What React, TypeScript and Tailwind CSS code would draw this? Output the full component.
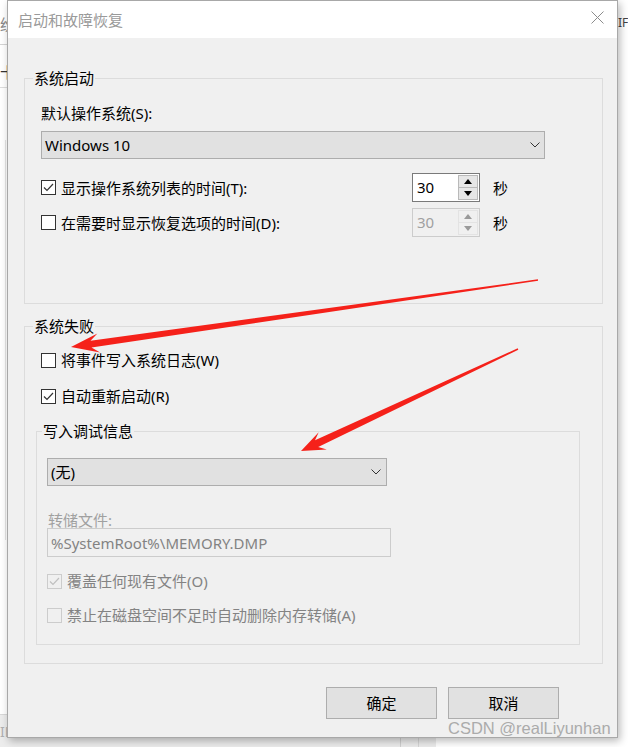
import React from "react";

function arrowPoints(
  tx: number, ty: number, hx: number, hy: number,
  tailW: number, neckW: number, headLen: number, headHalf: number
) {
  const dx = hx - tx, dy = hy - ty;
  const L = Math.hypot(dx, dy);
  const ux = dx / L, uy = dy / L;
  const nx = -uy, ny = ux;
  const bx = hx - ux * headLen, by = hy - uy * headLen;
  const kx = hx - ux * headLen * 0.72, ky = hy - uy * headLen * 0.72;
  const p = [
    [tx + (nx * tailW) / 2, ty + (ny * tailW) / 2],
    [kx + (nx * neckW) / 2, ky + (ny * neckW) / 2],
    [bx + nx * headHalf, by + ny * headHalf],
    [hx, hy],
    [bx - nx * headHalf, by - ny * headHalf],
    [kx - (nx * neckW) / 2, ky - (ny * neckW) / 2],
    [tx - (nx * tailW) / 2, ty - (ny * tailW) / 2],
  ];
  return p.map((q) => q.map((v) => v.toFixed(1)).join(",")).join(" ");
}

function Check({ checked, disabled }: { checked?: boolean; disabled?: boolean }) {
  return (
    <div
      className={`w-[15px] h-[15px] shrink-0 border ${
        disabled ? "border-[#cccccc] bg-[#f0f0f0]" : "border-[#333333] bg-white"
      }`}
    >
      {checked && (
        <svg width="13" height="13" viewBox="0 0 13 13" className="block">
          <polyline
            points="2,6.5 5,9.5 11,3"
            fill="none"
            stroke={disabled ? "#c0c0c0" : "#333333"}
            strokeWidth="1.2"
          />
        </svg>
      )}
    </div>
  );
}

function Chevron() {
  return (
    <svg width="10" height="6" viewBox="0 0 10 6" className="block">
      <polyline points="0.5,0.5 5,5 9.5,0.5" fill="none" stroke="#333333" strokeWidth="1" />
    </svg>
  );
}

function Tri({ up, color }: { up?: boolean; color: string }) {
  return (
    <svg width="8" height="5" viewBox="0 0 8 5" className="block">
      <polygon points={up ? "0,5 4,0 8,5" : "0,0 8,0 4,5"} fill={color} />
    </svg>
  );
}

function Spin({ disabled }: { disabled?: boolean }) {
  const btn = disabled
    ? "border-[#e3e3e3] bg-[#f0f0f0]"
    : "border-[#b9b9b9] bg-[#e6e6e6]";
  const tri = disabled ? "#9a9a9a" : "#000000";
  return (
    <div
      className={`flex h-[29px] w-[68px] border ${
        disabled ? "border-[#cccccc] bg-[#f0f0f0]" : "border-[#7a7a7a] bg-white"
      }`}
    >
      <div
        className={`flex-1 pl-[4px] leading-[27px] text-[15px] ${
          disabled ? "text-[#a0a0a0]" : "text-black"
        }`}
      >
        30
      </div>
      <div className="flex flex-col w-[20px] my-[1px] mr-[1px]">
        <div className={`flex-1 border flex items-center justify-center ${btn}`}>
          <Tri up color={tri} />
        </div>
        <div className={`flex-1 border border-t-0 flex items-center justify-center ${btn}`}>
          <Tri color={tri} />
        </div>
      </div>
    </div>
  );
}

function GroupLabel({ children, ml }: { children: React.ReactNode; ml: string }) {
  return (
    <div className={`-mt-[10px] ${ml} self-start px-[1px] bg-[#f0f0f0] leading-[19px] text-[15px] text-black`}>
      {children}
    </div>
  );
}

export default function App() {
  const a1 = arrowPoints(538, 280, 71, 347, 1.5, 7, 28, 9.5);
  const a2 = arrowPoints(518, 349, 301, 451, 1.5, 7.5, 24, 9.5);

  return (
    <div className="relative w-[628px] h-[747px] overflow-hidden bg-white font-['Noto_Sans','Noto_Sans_CJK_SC',sans-serif]">
      {/* window behind */}
      <div className="absolute left-0 top-[15px] text-[15px] leading-[18px] text-[#888888]">纷</div>
      <div className="absolute left-0 top-[44px] w-[8px] h-[1px] bg-[#d4d4d4]" />
      <div className="absolute left-0 top-[63px] text-[15px] leading-[18px] text-[#333333]">十</div>
      <div className="absolute left-0 top-[87px] w-[8px] h-[1px] bg-[#dddddd]" />
      <div className="absolute left-[5px] top-[140px] w-[1px] h-[400px] bg-[#e4e4e4]" />
      <div className="absolute left-0 top-[714px] w-[436px] h-[33px] bg-[#ececec] border-t border-[#d8d8d8]" />
      <div className="absolute left-0 top-[724px] text-[14px] leading-[16px] text-[#b0b0b0]">IE</div>
      <div className="absolute left-[400px] top-[714px] w-[1px] h-[33px] bg-[#d0d0d0]" />
      <div className="absolute left-[418px] top-[714px] w-[1px] h-[33px] bg-[#d6d6d6]" />
      <div className="absolute left-[618px] top-[15px] text-[12px] leading-[16px] text-[#444444]">IF</div>

      {/* dialog */}
      <div className="absolute left-[7px] top-0 w-[611px] h-[738px] border border-[#a8a8a8] bg-[#f0f0f0] shadow-[2px_3px_8px_rgba(0,0,0,0.28)] flex flex-col">
        <div className="h-[37px] bg-white flex items-center justify-between pl-[10px] pr-[13px]">
          <div className="text-[15px] text-[#9a9a9a] leading-[20px] pt-[1px]">启动和故障恢复</div>
          <svg width="13" height="13" viewBox="0 0 13 13" className="block -mt-[5px]">
            <line x1="0.5" y1="0.5" x2="12.5" y2="12.5" stroke="#8c8c8c" strokeWidth="1" />
            <line x1="12.5" y1="0.5" x2="0.5" y2="12.5" stroke="#8c8c8c" strokeWidth="1" />
          </svg>
        </div>

        <div className="flex flex-col pl-[16px] pr-[14px]">
          {/* 系统启动 */}
          <div className="mt-[40px] border border-[#dcdcdc] flex flex-col pl-[16px] pb-[66px]">
            <GroupLabel ml="ml-[8px] -translate-x-[16px]">系统启动</GroupLabel>
            <div className="mt-[15px] leading-[20px] text-[15px] text-black">默认操作系统(S):</div>
            <div className="mt-[8px] h-[28px] w-[504px] bg-[#e1e1e1] border border-[#adadad] flex items-center justify-between pl-[3px] pr-[4px]">
              <span className="text-[15px] text-black leading-[20px]">Windows 10</span>
              <Chevron />
            </div>
            <div className="mt-[14px] flex items-center h-[29px]">
              <div className="w-[371px] flex items-center gap-[5px]">
                <Check checked />
                <span className="text-[15px] leading-[20px] text-black">显示操作系统列表的时间(T):</span>
              </div>
              <Spin />
              <span className="ml-[13px] text-[15px] leading-[20px] text-black">秒</span>
            </div>
            <div className="mt-[6px] flex items-center h-[29px]">
              <div className="w-[371px] flex items-center gap-[5px]">
                <Check />
                <span className="text-[15px] leading-[20px] text-black">在需要时显示恢复选项的时间(D):</span>
              </div>
              <Spin disabled />
              <span className="ml-[13px] text-[15px] leading-[20px] text-black">秒</span>
            </div>
          </div>

          {/* 系统失败 */}
          <div className="mt-[22px] border border-[#dcdcdc] flex flex-col pb-[18px]">
            <GroupLabel ml="ml-[8px]">系统失败</GroupLabel>
            <div className="mt-[14px] ml-[16px] flex items-center gap-[5px] h-[20px]">
              <Check />
              <span className="text-[15px] leading-[20px] text-black">将事件写入系统日志(W)</span>
            </div>
            <div className="mt-[16px] ml-[16px] flex items-center gap-[5px] h-[20px]">
              <Check checked />
              <span className="text-[15px] leading-[20px] text-black">自动重新启动(R)</span>
            </div>

            {/* 写入调试信息 */}
            <div className="mt-[25px] ml-[11px] mr-[22px] border border-[#dcdcdc] flex flex-col pb-[19px]">
              <GroupLabel ml="ml-[5px]">写入调试信息</GroupLabel>
              <div className="mt-[17px] ml-[10px] h-[28px] w-[340px] bg-[#e1e1e1] border border-[#adadad] flex items-center justify-between pl-[3px] pr-[5px]">
                <span className="text-[15px] text-black leading-[20px]">(无)</span>
                <Chevron />
              </div>
              <div className="mt-[26px] ml-[11px] leading-[16px] text-[15px] text-[#a0a0a0]">转储文件:</div>
              <div className="ml-[10px] h-[29px] w-[344px] border border-[#cccccc] bg-[#f0f0f0] flex items-center pl-[3px]">
                <span className="text-[15px] leading-[20px] text-[#838383]">%SystemRoot%\MEMORY.DMP</span>
              </div>
              <div className="mt-[14px] ml-[10px] flex items-center gap-[5px] h-[20px]">
                <Check checked disabled />
                <span className="text-[15px] leading-[20px] text-[#838383]">覆盖任何现有文件(O)</span>
              </div>
              <div className="mt-[14px] ml-[10px] flex items-center gap-[5px] h-[20px]">
                <Check disabled />
                <span className="text-[15px] leading-[20px] text-[#838383]">禁止在磁盘空间不足时自动删除内存转储(A)</span>
              </div>
            </div>
          </div>

          {/* buttons */}
          <div className="mt-[23px] flex justify-end gap-[11px] pr-[44px]">
            <button className="w-[111px] h-[32px] bg-[#e1e1e1] border border-[#adadad] text-[15px] leading-[20px] text-black">确定</button>
            <button className="w-[111px] h-[32px] bg-[#e1e1e1] border border-[#adadad] text-[15px] leading-[20px] text-black">取消</button>
          </div>
        </div>
      </div>

      {/* watermark */}
      <div className="absolute left-[448px] top-[719px] text-[16.5px] leading-[19px] text-[#ababab] font-['Liberation_Sans',Arial,sans-serif]">
        CSDN @realLiyunhan
      </div>

      {/* annotation arrows */}
      <svg className="absolute left-0 top-0 pointer-events-none" width="628" height="747" viewBox="0 0 628 747">
        <polygon points={a1} fill="#f5211a" />
        <polygon points={a2} fill="#f5211a" />
      </svg>
    </div>
  );
}
